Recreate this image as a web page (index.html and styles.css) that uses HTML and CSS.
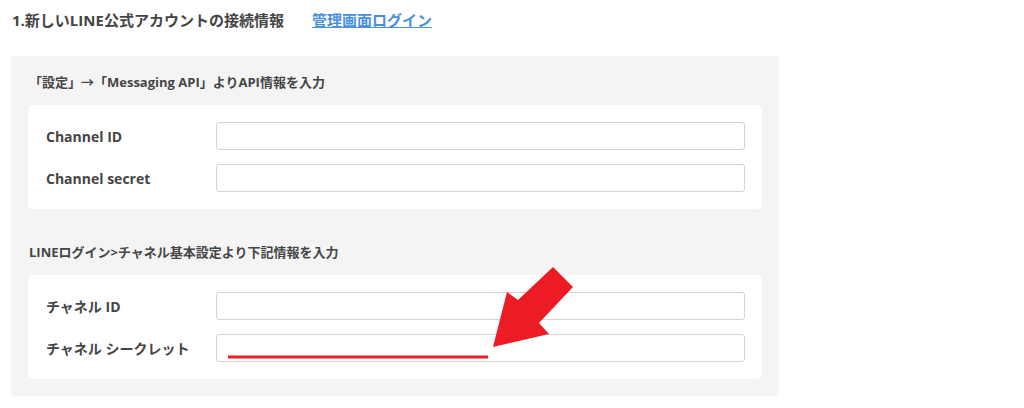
FILE: index.html
```html
<!DOCTYPE html>
<html lang="ja">
<head>
  <meta charset="UTF-8" />
  <meta name="viewport" content="width=device-width, initial-scale=1.0" />
  <title>LINE公式アカウント接続情報</title>
  <link rel="stylesheet" href="styles.css">
</head>
<body>
  <div class="page">
    <div class="head">
      <h1>1.新しいLINE公式アカウントの接続情報</h1>
      <a href="#" class="admin-link">管理画面ログイン</a>
    </div>

    <div class="panel">
      <h2>「設定」→「Messaging API」よりAPI情報を入力</h2>
      <div class="card">
        <div class="row">
          <label for="channelId">Channel ID</label>
          <input type="text" id="channelId" />
        </div>
        <div class="row">
          <label for="channelSecret">Channel secret</label>
          <input type="text" id="channelSecret" />
        </div>
      </div>

      <h2>LINEログイン&gt;チャネル基本設定より下記情報を入力</h2>
      <div class="card">
        <div class="row">
          <label for="loginId">チャネル ID</label>
          <input type="text" id="loginId" />
        </div>
        <div class="row">
          <label for="loginSecret">チャネル シークレット</label>
          <input type="text" id="loginSecret" />
        </div>
      </div>
    </div>

    <!-- annotation: red arrow + underline -->
    <svg class="note" width="1024" height="408" viewBox="0 0 1024 408">
      <line x1="228" y1="357" x2="488" y2="357" stroke="#ed1c24" stroke-width="3" />
      <polygon fill="#ed1c24"
        points="553,267 573,287 539,323 549,334 493,347 507,292 518,300" />
    </svg>
  </div>
</body>
</html>
```

FILE: styles.css
```css
body {
  margin: 0;
  background: #fff;
  font-family: "Open Sans", "Noto Sans CJK JP", sans-serif;
  color: #454545;
}
.page {
  position: relative;
  width: 1024px;
  height: 408px;
  overflow: hidden;
}
.head {
  display: flex;
  align-items: center;
  height: 40px;
  padding-left: 12px;
}
.head h1 {
  margin: 0;
  font-size: 15px;
  font-weight: 700;
  line-height: 20px;
}
.admin-link {
  margin-left: 28px;
  font-size: 15px;
  font-weight: 700;
  color: #4a8fdc;
  text-decoration: underline;
  line-height: 20px;
}
.panel {
  margin: 16px 0 0 11px;
  width: 734px;
  padding: 0 17px 17px;
  background: #f4f4f4;
  border-radius: 4px;
}
.panel h2 {
  margin: 0;
  padding: 17px 1px 14px;
  font-size: 13px;
  font-weight: 700;
  line-height: 18px;
}
.card + h2 {
  padding-top: 34px;
}
.card {
  background: #fff;
  border-radius: 5px;
  padding: 17px 17px 17px 18px;
  display: flex;
  flex-direction: column;
  gap: 14px;
}
.row {
  display: grid;
  grid-template-columns: 170px 1fr;
  align-items: center;
}
.row label {
  font-size: 14px;
  font-weight: 700;
}
.row input {
  box-sizing: border-box;
  height: 28px;
  border: 1px solid #d4d4d4;
  border-radius: 3px;
  background: #fff;
}
.note {
  position: absolute;
  left: 0;
  top: 0;
  pointer-events: none;
}
```
